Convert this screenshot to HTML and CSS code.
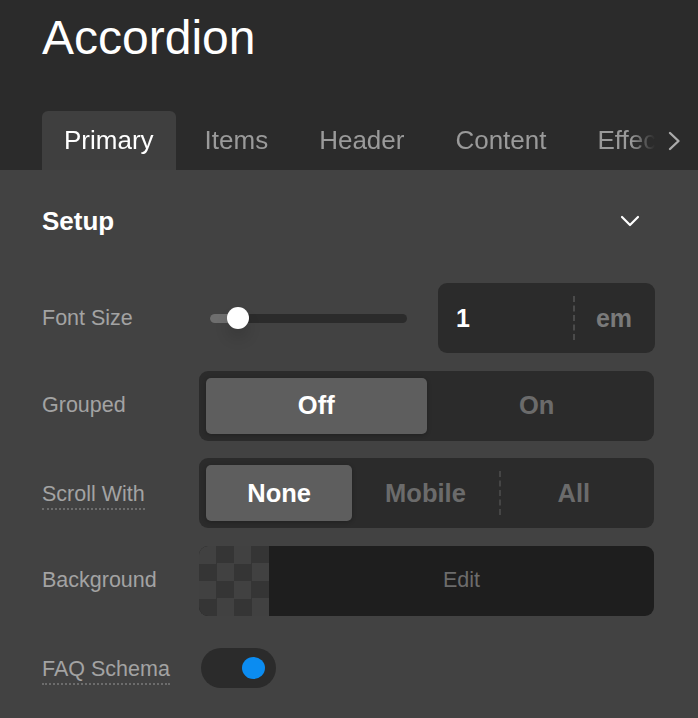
FILE: index.html
```html
<!DOCTYPE html>
<html lang="en">
<head>
<meta charset="utf-8">
<title>Accordion</title>
<link rel="stylesheet" href="styles.css">
</head>
<body>
<header class="header">
  <h1 class="title">Accordion</h1>
  <div class="tabbar">
    <nav class="tabs">
      <div class="tab active">Primary</div>
      <div class="tab">Items</div>
      <div class="tab">Header</div>
      <div class="tab">Content</div>
      <div class="tab">Effects</div>
    </nav>
    <button class="tab-next" aria-label="More tabs">
      <svg width="13" height="20" viewBox="0 0 13 20"><polyline points="2,2 10.5,10 2,18" fill="none" stroke="#ababab" stroke-width="2.4" stroke-linecap="round" stroke-linejoin="round"/></svg>
    </button>
  </div>
</header>

<main class="panel">
  <div class="section-head">
    <h2 class="section-title">Setup</h2>
    <svg class="section-chevron" width="20" height="13" viewBox="0 0 20 13"><polyline points="2,2 10,10 18,2" fill="none" stroke="#ffffff" stroke-width="2.2" stroke-linecap="round" stroke-linejoin="round"/></svg>
  </div>

  <div class="rows">
    <div class="label">Font Size</div>
    <div class="control size-control">
      <div class="slider">
        <div class="track">
          <div class="fill" style="width:28px"></div>
          <div class="thumb" style="left:28px"></div>
        </div>
      </div>
      <div class="number-box">
        <div class="number-value">1</div>
        <div class="number-sep"></div>
        <div class="number-unit">em</div>
      </div>
    </div>

    <div class="label">Grouped</div>
    <div class="control segmented">
      <div class="seg active">Off</div>
      <div class="seg">On</div>
    </div>

    <div class="label"><span class="hint">Scroll With</span></div>
    <div class="control segmented">
      <div class="seg active">None</div>
      <div class="seg">Mobile</div>
      <div class="seg sep-before">All</div>
    </div>

    <div class="label">Background</div>
    <div class="control bg-picker">
      <div class="checker"></div>
      <div class="bg-edit">Edit</div>
    </div>

    <div class="label"><span class="hint">FAQ Schema</span></div>
    <div class="control toggle-cell">
      <div class="toggle"><div class="knob"></div></div>
    </div>
  </div>
</main>
</body>
</html>
```

FILE: styles.css
```css
* { box-sizing: border-box; }

html, body {
  margin: 0;
  padding: 0;
  background: #424242;
  font-family: "Liberation Sans", Arial, sans-serif;
  overflow: hidden;
}

.header {
  background: #2b2b2b;
  padding: 14px 0 0 42px;
  height: 170px;
}

.title {
  margin: 0;
  font-size: 48px;
  line-height: 48px;
  font-weight: 400;
  color: #ffffff;
}

.tabbar {
  margin-top: 49px;
  display: flex;
  align-items: stretch;
  height: 59px;
}

.tabs {
  display: flex;
  gap: 7px;
  width: 613px;
  overflow: hidden;
  -webkit-mask-image: linear-gradient(to right, #000 calc(100% - 24px), transparent 100%);
  mask-image: linear-gradient(to right, #000 calc(100% - 24px), transparent 100%);
}

.tab {
  flex: none;
  padding: 0 22px;
  font-size: 26px;
  line-height: 59px;
  color: #9a9a9a;
  white-space: nowrap;
  border-radius: 6px 6px 0 0;
}

.tab.active {
  background: #3f3f3f;
  color: #ffffff;
}

.tab-next {
  background: none;
  border: 0;
  padding: 0;
  margin-left: 13px;
  display: flex;
  align-items: center;
  height: 59px;
}

.panel {
  padding: 36px 44px 0 42px;
}

.section-head {
  display: flex;
  align-items: center;
  justify-content: space-between;
  height: 30px;
}

.section-title {
  margin: 0;
  font-size: 26px;
  line-height: 30px;
  font-weight: 700;
  color: #ffffff;
}

.section-chevron {
  margin-right: 14px;
}

.rows {
  margin-top: 47px;
  display: grid;
  grid-template-columns: 157px 455px;
  grid-auto-rows: 70px;
  row-gap: 17.5px;
}

.label {
  display: flex;
  align-items: center;
  font-size: 21.5px;
  color: #a3a3a3;
  white-space: nowrap;
}

.hint {
  border-bottom: 2px dotted #6c6c6c;
  padding-bottom: 1px;
  margin-top: 5px;
}

.control {
  display: flex;
  align-items: center;
}

/* Font size */
.slider {
  flex: none;
  width: 239px;
  padding: 0 31px 0 11px;
}

.track {
  position: relative;
  height: 9px;
  border-radius: 5px;
  background: #2b2b2b;
}

.fill {
  height: 9px;
  border-radius: 5px 0 0 5px;
  background: #6e6e6e;
}

.thumb {
  position: absolute;
  top: 50%;
  width: 22px;
  height: 22px;
  margin: -11px 0 0 -11px;
  border-radius: 50%;
  background: #ffffff;
  box-shadow: 0 10px 14px rgba(0, 0, 0, 0.12);
}

.number-box {
  flex: none;
  width: 217px;
  height: 70px;
  background: #2b2b2b;
  border-radius: 9px;
  display: flex;
  align-items: center;
}

.number-value {
  width: 135px;
  padding-left: 18px;
  font-size: 25px;
  font-weight: 700;
  color: #ffffff;
}

.number-sep {
  height: 44px;
  border-left: 2px dashed #4b4b4b;
}

.number-unit {
  flex: 1;
  text-align: center;
  font-size: 25px;
  font-weight: 700;
  color: #7a7a7a;
  padding-right: 2px;
}

/* Segmented */
.segmented {
  background: #2b2b2b;
  border-radius: 9px;
  padding: 7px;
  align-items: stretch;
}

.seg {
  flex: 1;
  display: flex;
  align-items: center;
  justify-content: center;
  font-size: 25.5px;
  font-weight: 700;
  color: #6b6b6b;
  border-radius: 5px;
  position: relative;
}

.seg.active {
  background: #5e5e5e;
  color: #ffffff;
  box-shadow: 0 1px 4px rgba(0, 0, 0, 0.25);
}

.seg.sep-before {
  border-left: 2px dashed #454545;
  border-radius: 0;
  margin: 6px 0;
}

/* Background */
.bg-picker {
  background: #1e1e1e;
  border-radius: 9px;
  overflow: hidden;
  align-items: stretch;
}

.checker {
  flex: none;
  width: 70px;
  background: conic-gradient(#353535 0 25%, #414141 0 50%, #353535 0 75%, #414141 0);
  background-size: 35px 35px;
}

.bg-edit {
  flex: 1;
  display: flex;
  align-items: center;
  justify-content: center;
  font-size: 21.5px;
  color: #6c6c6c;
}

/* Toggle */
.toggle-cell {
  padding-left: 2px;
}

.toggle {
  width: 75px;
  height: 40px;
  border-radius: 20px;
  background: #2b2b2b;
  display: flex;
  align-items: center;
  justify-content: flex-end;
  padding-right: 11px;
}

.knob {
  width: 23px;
  height: 22px;
  border-radius: 50%;
  background: #0b8cf1;
}
```
